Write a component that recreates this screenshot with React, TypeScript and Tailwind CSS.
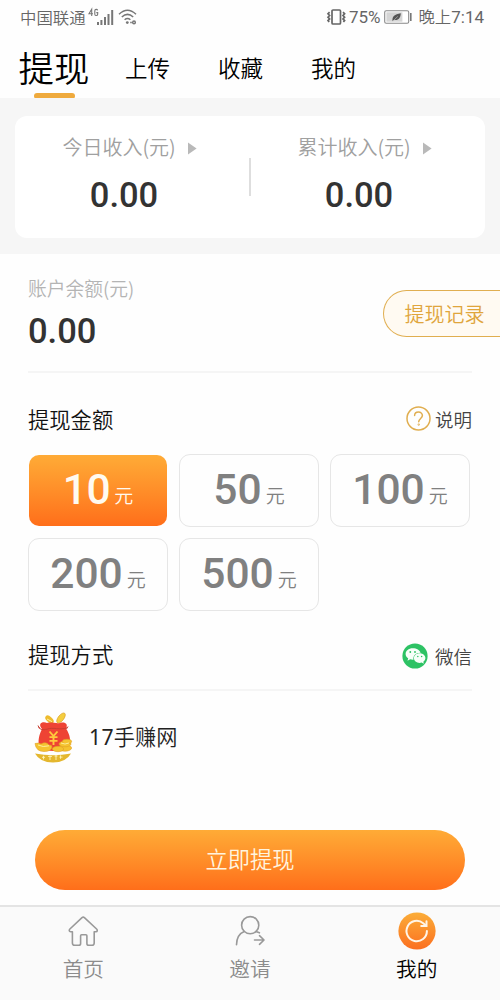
import React from "react";

const cjk = "font-['Noto_Sans_CJK_SC',sans-serif]";
const roboto = "font-['Roboto','Noto_Sans_CJK_SC',sans-serif]";

function Signal() {
  return (
    <svg width="28" height="24" viewBox="0 0 28 24" fill="#777" className="shrink-0">
      <g fill="none" stroke="#777" strokeWidth="1.1">
        <path d="M3.7 9V2.2L1 6.8h4" />
        <path d="M9.6 3.4C9.3 2 6.9 2 6.8 3.8v3.4c.2 1.8 2.8 1.8 2.9 0V5.6H8.3" />
      </g>
      <rect x="9" y="15" width="2" height="3" />
      <rect x="12.4" y="13" width="2" height="5" />
      <rect x="16" y="10" width="2" height="8" />
      <rect x="19.5" y="7" width="2" height="11" />
      <rect x="23.2" y="3" width="2" height="15" />
    </svg>
  );
}

function Wifi() {
  return (
    <svg width="20" height="18" viewBox="0 0 20 18" fill="none" stroke="#777" strokeWidth="1.5" className="shrink-0">
      <path d="M1 6.2Q9.5-1.8 18 6.2M3.8 9Q9.5 3.8 15.2 9M6.6 11.8q2.9-2.5 5.8 0" />
      <circle cx="9.3" cy="14.6" r="1.4" fill="#777" stroke="none" />
      <path d="M12.2 14.5h1.6" />
      <circle cx="16" cy="14.4" r="1.3" />
    </svg>
  );
}

function Vibrate() {
  return (
    <svg width="21" height="18" viewBox="0 0 21 18" fill="none" stroke="#666" className="shrink-0">
      <rect x="6" y="2" width="8.5" height="14" rx="1" strokeWidth="1.7" />
      <path d="M3.6 4.2 2 5.8l1.6 1.7L2 9.2l1.6 1.7L2 12.6 3.2 14M17 4.2l1.6 1.6L17 7.5l1.6 1.7-1.6 1.7 1.6 1.7-1.2 1.4" strokeWidth="1.7" />
    </svg>
  );
}

function Battery() {
  return (
    <svg width="28" height="14" viewBox="0 0 28 14" className="shrink-0">
      <rect x=".7" y=".8" width="24" height="12.4" rx="1.5" fill="#fff" stroke="#888" strokeWidth="1.1" />
      <rect x="2.4" y="2.3" width="16" height="9.4" fill="#d5d5d5" />
      <path d="M8.5 11C8 6.5 10.6 4.4 16.8 3.3c-.2 5-2.7 7.5-6.6 6.6Z" fill="#555" />
      <path d="m8.4 11.6 5.4-5.2" stroke="#ccc" strokeWidth=".6" />
      <rect x="26" y="3" width="1.6" height="8" fill="#777" />
    </svg>
  );
}

function Income({ label }: { label: string }) {
  return (
    <div className="flex w-[235px] flex-col pt-[16px]">
      <div className="flex h-[30px] items-center pl-[47.5px]">
        <span className={`${cjk} text-[20px] leading-[30px] text-[#a0a0a0]`}>{label}</span>
        <svg width="9" height="13" viewBox="0 0 9 13" className="mt-[2px] ml-[12px]">
          <path d="M0 .5 8.6 6.5 0 12.5Z" fill="#b9b9b9" />
        </svg>
      </div>
      <div className="mt-[12px] w-[218px] text-center font-['Roboto',sans-serif] text-[34.5px] leading-[42px] font-medium text-[#333]">0.00</div>
    </div>
  );
}

function Amount({ value, active = false }: { value: string; active?: boolean }) {
  return (
    <button
      className={`flex h-[73px] items-baseline justify-center rounded-[11px] pt-[12px] ${
        active
          ? "border border-transparent bg-linear-to-b from-[#ffab36] to-[#ff6e1a] bg-clip-padding text-[#fffaf0]"
          : "border-[1.5px] border-[#e6e6e6] text-[#808080]"
      }`}
    >
      <span className={`font-['Roboto',sans-serif] text-[42.5px] leading-[46px] font-medium ${active ? "tracking-[-0.5px]" : ""}`}>{value}</span>
      <span className={`${cjk} ml-[4px] -translate-y-px text-[19px] leading-[20px]`}>元</span>
    </button>
  );
}

function HomeIcon() {
  return (
    <svg width="32" height="32" viewBox="0 0 32 32" fill="none" stroke="#999" strokeWidth="1.6" strokeLinejoin="round" strokeLinecap="round">
      <path d="M15 2.7q1.2-1 2.4 0L29.6 14c1.2 1.2.8 2.7-.7 2.7h-1.7v11.2q0 2.3-2.3 2.3h-3.2q-1.8 0-1.8-1.8v-7.7q0-1-1-1h-4.3q-1 0-1 1v7.7q0 1.8-1.8 1.8H7.7q-2.3 0-2.3-2.3V16.7H3.6c-1.4 0-1.9-1.5-.7-2.7Z" />
    </svg>
  );
}

function InviteIcon() {
  return (
    <svg width="32" height="32" viewBox="0 0 32 32" fill="none" stroke="#999" strokeWidth="1.6" strokeLinecap="round" strokeLinejoin="round">
      <circle cx="16.2" cy="10.2" r="8.6" />
      <path d="M10.2 16.4C5.4 18.3 2.6 23 2.5 29.8M22 16.4l3.4 1.4M20.5 25h9.3m-4.3-4.3 4.5 4.3-4.5 4.3" />
    </svg>
  );
}

function MineIcon() {
  return (
    <svg width="38" height="38" viewBox="0 0 38 38" fill="none">
      <defs>
        <linearGradient id="mine" x1="0" y1="0" x2="0" y2="1">
          <stop stopColor="#fbad38" />
          <stop offset="1" stopColor="#fb6f20" />
        </linearGradient>
      </defs>
      <circle cx="19" cy="19" r="18.6" fill="url(#mine)" />
      <path d="M28.9 19A10.2 10.2 0 1 1 25.2 11.2L28 13.6" stroke="#fff5e8" strokeWidth="2" strokeLinecap="round" />
      <path d="M28.5 9.3v4.8h-5.3" stroke="#fff5e8" strokeWidth="2" strokeLinecap="round" />
    </svg>
  );
}

function WeChat() {
  return (
    <svg width="26" height="26" viewBox="0 0 26 26" className="mt-px">
      <circle cx="13" cy="13" r="12.6" fill="#2dc264" />
      <path d="M10.8 5.2c-4.3 0-7.2 2.5-7.2 5.7 0 1.9 1 3.3 2.6 4.4l-.7 2.4 2.7-1.4c.9.3 1.8.4 2.6.4h.7c-.8-3.8 2.4-7 6.8-7h.3c-.8-2.7-3.9-4.5-7.8-4.5Z" fill="#f7fff9" />
      <path d="M17.7 10.2c3.3 0 5.7 2.2 5.7 4.9 0 1.5-.8 2.8-2.1 3.7l.5 2-2.2-1.2c-.6.2-1.2.3-1.9.3-3.3 0-5.8-2.1-5.8-4.8s2.5-4.9 5.8-4.9Z" fill="#f7fff9" />
      <g fill="#2dc264">
        <circle cx="8.3" cy="9" r=".9" />
        <circle cx="13" cy="9" r=".9" />
        <circle cx="15.8" cy="13.5" r=".75" />
        <circle cx="19.6" cy="13.5" r=".75" />
      </g>
    </svg>
  );
}

function MoneyBag() {
  return (
    <svg width="40" height="54" viewBox="0 0 40 54">
      <ellipse cx="15.5" cy="8.5" rx="2.8" ry="5" transform="rotate(-48 15.5 8.5)" fill="#eebb2d" />
      <ellipse cx="27" cy="7" rx="2.8" ry="6" transform="rotate(38 27 7)" fill="#f4cd3e" stroke="#d99b20" strokeWidth=".6" />
      <path d="M13 8l5 2.6" stroke="#fff0a0" strokeWidth="1" />
      <path d="M8 18C3.5 13 8 10 13 12c5-1.5 9 1 13 0 5-1.5 8.5 1 6 5.5 4 6 5.5 13 2.5 19.5-8 4-22 4-29 0-2-7-.5-13 2.5-19Z" fill="#ee4334" />
      <path d="M5 16c1 3 4 3 8 2.2 6-2.4 13 1.3 20-1.4M4 14.5l1.5 3.2M34 15.5l-1.5 2.4" fill="none" stroke="#c93d30" strokeWidth="1" />
      <path d="m15.5 20.5 4 4.6 4-4.6m-8 5.6h8m-8 3.8h8m-4-4.6v8.6" fill="none" stroke="#ffc93c" strokeWidth="1.9" />
      <g fill="#f5c330" stroke="#e0a023" strokeWidth=".6">
        <path d="M1 32.5q4-1 6 .5 5-3 8 1 3-.5 3 2-1 4.5-8 4.5-8 0-9-8Z" />
        <ellipse cx="31" cy="37" rx="6.6" ry="3.2" />
        <ellipse cx="24" cy="38" rx="5.6" ry="2.7" />
        <ellipse cx="31" cy="33" rx="6" ry="2.8" />
        <ellipse cx="33" cy="30.5" rx="4.6" ry="2.2" />
      </g>
      <path d="M4 34q5 2.6 11 .8m12-2.8q4 2 8 0" fill="none" stroke="#fff09a" strokeWidth="1" />
      <path d="M1 42.5q18 3.5 36 0-5 9-18 9t-18-9Z" fill="#e4b72e" />
      <path d="M8 46.3h3m-1.5-1.5v3.6m4.5-3h4m-2-1v4.6m4.5-4h3m-1.5-1v5m4.5-4.6v3.4m-1-1.7h3" stroke="#fff4b7" strokeWidth=".9" />
    </svg>
  );
}

function NavItem({ icon, label, active = false }: { icon: React.ReactNode; label: string; active?: boolean }) {
  return (
    <div className="flex flex-1 flex-col items-center pt-[5px]">
      <div className="flex h-[38px] items-center justify-center">{icon}</div>
      <span className={`${cjk} mt-[3px] text-[20.7px] leading-[30px] ${active ? "text-black" : "text-[#8c8c8c]"}`}>{label}</span>
    </div>
  );
}

export default function App() {
  return (
    <div className={`${cjk} flex h-[1000px] w-[500px] flex-col overflow-hidden bg-[#fefefe] font-[350]`}>
      <header className="flex h-[34px] shrink-0 items-center pr-[16px] pl-[20px] text-[16.4px] leading-[24px] text-[#666]">
        <span className="-mt-px">中国联通</span>
        <span className="mt-[3px] ml-[2px] flex"><Signal /></span>
        <span className="ml-[2px]"><Wifi /></span>
        <span className="ml-auto"><Vibrate /></span>
        <span className={`${roboto} ml-[2px] text-[17px] font-normal`}>75%</span>
        <span className="ml-[4px]"><Battery /></span>
        <span className={`${roboto} ml-[6px] text-[16.4px] whitespace-nowrap`}>晚上<span className="text-[17px] font-normal">7:14</span></span>
      </header>

      <nav className="flex h-[64px] shrink-0 pl-[19px] text-[22.5px] whitespace-nowrap text-black">
        <div className="flex w-[70px] flex-col items-center">
          <span className="h-[59px] text-[35.4px] leading-[65px]">提现</span>
          <span className="h-[6px] w-[41px] shrink-0 rounded-full bg-[#efaa3d]" />
        </div>
        <span className="ml-[36px] w-[93px] leading-[66px]">上传</span>
        <span className="w-[93px] leading-[66px]">收藏</span>
        <span className="leading-[66px]">我的</span>
      </nav>

      <section className="h-[156px] shrink-0 bg-[#f6f6f6] px-[15px] pt-[18px]">
        <div className="flex h-[122px] rounded-[12px] bg-white">
          <Income label="今日收入(元)" />
          <div className="mt-[42px] -mr-[1px] -ml-px h-[38px] w-[2px] shrink-0 bg-[#dedede]" />
          <Income label="累计收入(元)" />
        </div>
      </section>

      <section className="flex h-[117px] shrink-0 justify-between pl-[28px]">
        <div className="pt-[19px]">
          <div className="text-[18.8px] leading-[30px] text-[#b4b4b4]">账户余额(元)</div>
          <div className="mt-[7px] font-['Roboto',sans-serif] text-[34.5px] leading-[42px] font-medium text-[#333]">0.00</div>
        </div>
        <button className="mt-[36px] h-[47px] w-[117.5px] rounded-l-full border-[1.5px] border-r-0 border-[#e0ae50] bg-[#fffaf2] pl-[21px] text-left text-[20px] leading-[42px] whitespace-nowrap text-[#e0a53c]">提现记录</button>
      </section>

      <main className="flex flex-col px-[28px]">
        <div className="h-[2px] bg-[#f5f5f5]" />
        <div className="flex h-[81px] items-center justify-between pt-[11px]">
          <h2 className="text-[21.3px] leading-[30px] text-[#111]">提现金额</h2>
          <div className="flex items-center gap-[4px] text-[18.5px] leading-[28px] text-[#444]">
            <svg width="25" height="25" viewBox="0 0 25 25" fill="none" stroke="#e0ae50" strokeWidth="1.5" strokeLinecap="round" className="-mt-[1px]">
              <circle cx="12.5" cy="12.5" r="11.5" />
              <path d="M8.6 9.6C8.7 4.8 16.5 5 16.4 9.6c0 2.8-3.7 3-3.7 6.2" />
              <circle cx="12.7" cy="18.6" r=".4" />
            </svg>
            说明
          </div>
        </div>
        <div className="grid w-[442px] grid-cols-3 gap-[11px]">
          <Amount value="10" active />
          <Amount value="50" />
          <Amount value="100" />
          <Amount value="200" />
          <Amount value="500" />
        </div>
        <div className="flex h-[78px] items-center justify-between pt-[11px]">
          <h2 className="-mt-[3px] text-[21.3px] leading-[30px] text-[#111]">提现方式</h2>
          <div className="flex items-center gap-[7px] text-[18.5px] leading-[28px] text-[#444]">
            <WeChat />
            微信
          </div>
        </div>
        <div className="h-[2px] bg-[#f5f5f5]" />
        <div className="flex h-[94px] items-center pl-[6px] text-[21.2px] text-[#222]">
          <MoneyBag />
          <span className="-mt-[3px] ml-[15px] font-['Noto_Sans','Noto_Sans_CJK_SC',sans-serif]"><span className="font-normal tracking-[0.3px]">17</span>手赚网</span>
        </div>
      </main>

      <button className="mx-[35px] mt-[45px] h-[60px] shrink-0 rounded-full bg-linear-to-b from-[#ffab36] to-[#ff6e1a] pb-[3px] text-[22.3px] leading-[57px] text-[#fff4df]">立即提现</button>

      <footer className="mt-auto flex h-[95px] shrink-0 border-t-2 border-[#e4e4e4] bg-[#fafafa]">
        <NavItem icon={<HomeIcon />} label="首页" />
        <NavItem icon={<InviteIcon />} label="邀请" />
        <NavItem icon={<MineIcon />} label="我的" active />
      </footer>
    </div>
  );
}
